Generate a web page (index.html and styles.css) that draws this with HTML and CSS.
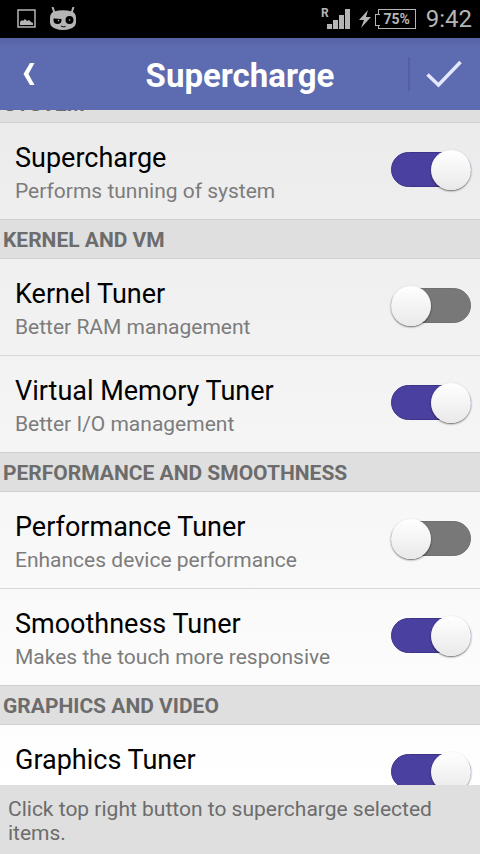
FILE: index.html
```html
<!DOCTYPE html>
<html lang="en">
<head>
<meta charset="utf-8">
<meta name="viewport" content="width=device-width, initial-scale=1">
<title>Supercharge</title>
<link rel="stylesheet" href="styles.css">
</head>
<body>
<div class="status">
  <svg class="status-icon" width="20" height="20" viewBox="0 0 20 20" aria-hidden="true"><rect x="1" y="1" width="17" height="17" fill="none" stroke="#b5b5b5" stroke-width="1.500"/><path d="M3 16v-3l2-2 1 1 2-2 2 2 2-1 2 2 2 1v2z" fill="#b5b5b5"/></svg>
  <svg class="status-icon" width="28" height="24" viewBox="0 0 28 24" aria-hidden="true"><path d="M3.500 0l2 6M24.500 0l-2 6" stroke="#b5b5b5" stroke-width="2"/><path d="M5 4.500Q14 2 23 4.500Q27 6 27 11v4q0 4.500-5 6.500Q14 24.500 6 21.500Q1 19.500 1 15v-4Q1 6 5 4.500z" fill="#b5b5b5"/><circle cx="20.500" cy="13" r="4" fill="#000"/><path d="M4.500 11.500l8 .5v1a4 4 0 0 1-8 0z" fill="#000"/><circle cx="9.500" cy="13.500" r=".8" fill="#b5b5b5"/><circle cx="20.500" cy="13" r=".8" fill="#b5b5b5"/><path d="M12 19q3 1.500 4.500 .5" stroke="#000" fill="none"/></svg>
  <span class="spacer"></span>
  <span class="roaming">R</span>
  <svg class="signal" width="24" height="20" viewBox="0 0 24 20" aria-hidden="true"><path d="M0 15h5v5H0zM6 11h5v9H6zM12 6h5v14h-5zM18 0h5v20h-5z" fill="#b5b5b5"/></svg>
  <svg class="bolt" width="12" height="18" viewBox="0 0 12 18" aria-hidden="true"><path d="M9 0L0 10h5L2 18 12 7H7z" fill="#b5b5b5"/></svg>
  <span class="battery"><span class="battery-level">75%</span></span>
  <time class="clock">9:42</time>
</div>
<header class="bar">
  <button class="bar-button" type="button" aria-label="Back"><svg width="12" height="22" viewBox="0 0 12 22"><path d="M7 0h4.500L5.500 11l6 11H7L0.500 11z" fill="#fff"/></svg></button>
  <h1 class="bar-title">Supercharge</h1>
  <button class="bar-button bar-apply" type="button" aria-label="Apply"><svg width="36" height="28" viewBox="0 0 36 28"><path d="M1.500 14.500L12.500 25L34.500 2" fill="none" stroke="#e3e8ff" stroke-width="3.500"/></svg></button>
</header>
<main class="content">
  <div class="list">
    <h2 class="section">SYSTEM</h2>
    <label class="row"><span class="text"><span class="name">Supercharge</span><span class="note">Performs tunning of system</span></span><input class="switch" type="checkbox" role="switch" checked></label>
    <h2 class="section">KERNEL AND VM</h2>
    <label class="row"><span class="text"><span class="name">Kernel Tuner</span><span class="note">Better RAM management</span></span><input class="switch" type="checkbox" role="switch"></label>
    <label class="row"><span class="text"><span class="name">Virtual Memory Tuner</span><span class="note">Better I/O management</span></span><input class="switch" type="checkbox" role="switch" checked></label>
    <h2 class="section">PERFORMANCE AND SMOOTHNESS</h2>
    <label class="row"><span class="text"><span class="name">Performance Tuner</span><span class="note">Enhances device performance</span></span><input class="switch" type="checkbox" role="switch"></label>
    <label class="row"><span class="text"><span class="name">Smoothness Tuner</span><span class="note">Makes the touch more responsive</span></span><input class="switch" type="checkbox" role="switch" checked></label>
    <h2 class="section">GRAPHICS AND VIDEO</h2>
    <label class="row"><span class="text"><span class="name">Graphics Tuner</span><span class="note">Graphics and more</span></span><input class="switch" type="checkbox" role="switch" checked></label>
  </div>
</main>
<footer class="hint">Click top right button to supercharge selected items.</footer>
</body>
</html>
```

FILE: styles.css
```css
* { box-sizing: border-box; }

body {
  margin: 0;
  height: 100vh;
  display: flex;
  flex-direction: column;
  overflow: hidden;
  font-family: Roboto, "Liberation Sans", sans-serif;
  background: linear-gradient(#e8e8e8, #fff 92%);
}

h1, h2 { margin: 0; }

.status {
  flex: none;
  display: flex;
  align-items: center;
  height: 38px;
  padding: 0 8px 0 17px;
  background: #000;
  color: #b5b5b5;
}
.status-icon { margin-right: 12px; }
.spacer { flex: 1; }
.roaming {
  align-self: flex-start;
  margin-right: -2px;
  padding-top: 7px;
  font-size: 12px;
  line-height: 12px;
  font-weight: 700;
}
.signal { margin-right: 8px; }
.bolt { margin-right: 5px; }
.battery {
  position: relative;
  border: 1px solid #b5b5b5;
  width: 38px;
  height: 20px;
  margin: 0 10px 0 2px;
}
.battery::before {
  content: "";
  position: absolute;
  left: -4px;
  top: 4px;
  width: 4px;
  height: 10px;
  border: 1px solid #b5b5b5;
  border-right: 0;
  background: #000;
}
.battery-level {
  display: block;
  text-align: center;
  font-size: 14px;
  line-height: 18px;
  font-weight: 700;
}
.clock { font-size: 24px; line-height: 40px; }

.bar {
  flex: none;
  display: flex;
  align-items: center;
  height: 72px;
  background: linear-gradient(#5664a6, #5d6bb0 12%);
  color: #fff;
}
.bar-title {
  flex: 1;
  padding-top: 4px;
  text-align: center;
  font-size: 33px;
  line-height: 40px;
  font-weight: 700;
}
.bar-button {
  display: flex;
  align-items: center;
  justify-content: center;
  width: 72px;
  height: 34px;
  padding: 0 14px 0 0;
  border: 0;
  background: none;
}
.bar-apply {
  padding: 0 2px 0 0;
  border-left: 2px solid #5360a0;
}

.content {
  flex: 1;
  min-height: 0;
  overflow: hidden;
}
/* The list is scrolled past most of its first heading. */
.list { margin-top: -27px; }

.section {
  height: 40px;
  padding: 0 3px;
  border: solid #d0d0d0;
  border-width: 1px 0;
  background: #dfdfdf;
  color: #6c6c6c;
  font-size: 21px;
  line-height: 40px;
  font-weight: 700;
}
.row {
  display: flex;
  align-items: flex-start;
  height: 96px;
  padding: 17px 9px 0 15px;
}
.row + .row {
  height: 97px;
  border-top: 1px solid #d9d9d9;
}
.text { flex: 1; }
.name, .note { display: block; }
.name {
  color: #000;
  font-size: 27px;
  line-height: 36px;
}
.note {
  color: #7c7c7c;
  font-size: 21px;
  line-height: 30px;
}
.switch {
  appearance: none;
  flex: none;
  position: relative;
  width: 80px;
  height: 35px;
  margin: 12px 0 0;
  border-radius: 18px;
  border: 1px solid #707070;
  background: #787878;
}
.switch::before {
  content: "";
  position: absolute;
  left: -1px;
  top: -3px;
  width: 40px;
  height: 40px;
  border-radius: 50%;
  background: linear-gradient(#fff, #e9e9e9);
  box-shadow: 0 1px 2px rgba(0, 0, 0, .6);
}
.switch:checked {
  border-color: #3c348a;
  background: #4a409f;
}
.switch:checked::before { left: 39px; }

.hint {
  flex: none;
  padding: 12px 8px 9px;
  background: #dfdfdf;
  color: #6c6c6c;
  font-size: 21px;
  line-height: 24px;
}
```
